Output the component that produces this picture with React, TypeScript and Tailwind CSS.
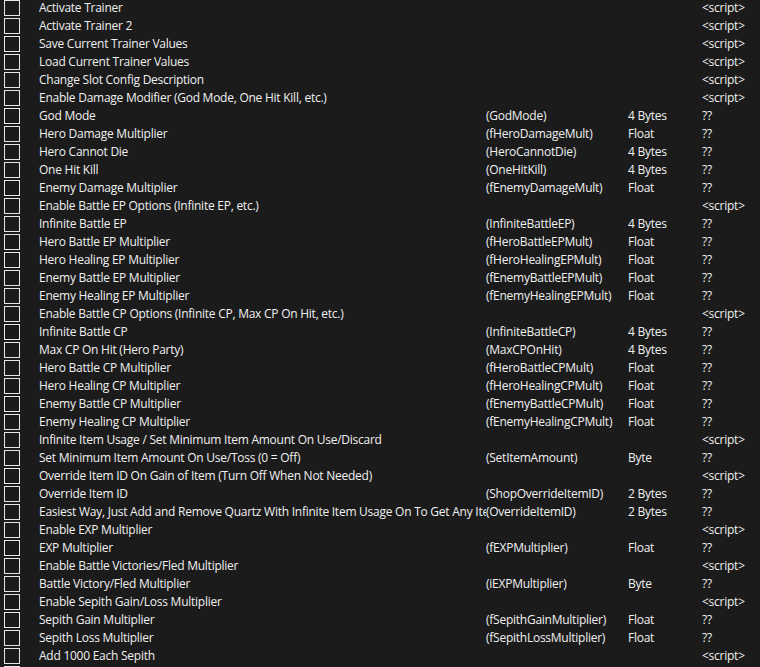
import React from "react";

type Row = [string, string?, string?, string?];

const rows: Row[] = [
  ["Activate Trainer", "", "", "<script>"],
  ["Activate Trainer 2", "", "", "<script>"],
  ["Save Current Trainer Values", "", "", "<script>"],
  ["Load Current Trainer Values", "", "", "<script>"],
  ["Change Slot Config Description", "", "", "<script>"],
  ["Enable Damage Modifier (God Mode, One Hit Kill, etc.)", "", "", "<script>"],
  ["God Mode", "(GodMode)", "4 Bytes", "??"],
  ["Hero Damage Multiplier", "(fHeroDamageMult)", "Float", "??"],
  ["Hero Cannot Die", "(HeroCannotDie)", "4 Bytes", "??"],
  ["One Hit Kill", "(OneHitKill)", "4 Bytes", "??"],
  ["Enemy Damage Multiplier", "(fEnemyDamageMult)", "Float", "??"],
  ["Enable Battle EP Options (Infinite EP, etc.)", "", "", "<script>"],
  ["Infinite Battle EP", "(InfiniteBattleEP)", "4 Bytes", "??"],
  ["Hero Battle EP Multiplier", "(fHeroBattleEPMult)", "Float", "??"],
  ["Hero Healing EP Multiplier", "(fHeroHealingEPMult)", "Float", "??"],
  ["Enemy Battle EP Multiplier", "(fEnemyBattleEPMult)", "Float", "??"],
  ["Enemy Healing EP Multiplier", "(fEnemyHealingEPMult)", "Float", "??"],
  ["Enable Battle CP Options (Infinite CP, Max CP On Hit, etc.)", "", "", "<script>"],
  ["Infinite Battle CP", "(InfiniteBattleCP)", "4 Bytes", "??"],
  ["Max CP On Hit (Hero Party)", "(MaxCPOnHit)", "4 Bytes", "??"],
  ["Hero Battle CP Multiplier", "(fHeroBattleCPMult)", "Float", "??"],
  ["Hero Healing CP Multiplier", "(fHeroHealingCPMult)", "Float", "??"],
  ["Enemy Battle CP Multiplier", "(fEnemyBattleCPMult)", "Float", "??"],
  ["Enemy Healing CP Multiplier", "(fEnemyHealingCPMult)", "Float", "??"],
  ["Infinite Item Usage / Set Minimum Item Amount On Use/Discard", "", "", "<script>"],
  ["Set Minimum Item Amount On Use/Toss (0 = Off)", "(SetItemAmount)", "Byte", "??"],
  ["Override Item ID On Gain of Item (Turn Off When Not Needed)", "", "", "<script>"],
  ["Override Item ID", "(ShopOverrideItemID)", "2 Bytes", "??"],
  ["Easiest Way, Just Add and Remove Quartz With Infinite Item Usage On To Get Any Item", "(OverrideItemID)", "2 Bytes", "??"],
  ["Enable EXP Multiplier", "", "", "<script>"],
  ["EXP Multiplier", "(fEXPMultiplier)", "Float", "??"],
  ["Enable Battle Victories/Fled Multiplier", "", "", "<script>"],
  ["Battle Victory/Fled Multiplier", "(iEXPMultiplier)", "Byte", "??"],
  ["Enable Sepith Gain/Loss Multiplier", "", "", "<script>"],
  ["Sepith Gain Multiplier", "(fSepithGainMultiplier)", "Float", "??"],
  ["Sepith Loss Multiplier", "(fSepithLossMultiplier)", "Float", "??"],
  ["Add 1000 Each Sepith", "", "", "<script>"],
  ["", "", "", ""],
];

export default function App() {
  return (
    <div
      className="w-[760px] h-[667px] overflow-hidden bg-[#1b1b1b] text-[#f0f0f0] text-[12px] tracking-[-0.25px]"
      style={{ fontFamily: '"Open Sans", "Noto Sans", sans-serif' }}
    >
      {rows.map((r, i) => (
        <div
          key={i}
          className="grid grid-cols-[39px_447px_142px_74px_58px] h-[18px] leading-[16px]"
        >
          <div className="pl-[4px]">
            <div className="w-[16px] h-[16px] border border-[#e8e8e8]" />
          </div>
          <div className="overflow-hidden whitespace-nowrap">{r[0]}</div>
          <div className="whitespace-nowrap">{r[1]}</div>
          <div className="whitespace-nowrap">{r[2]}</div>
          <div className="whitespace-nowrap">{r[3]}</div>
        </div>
      ))}
    </div>
  );
}
